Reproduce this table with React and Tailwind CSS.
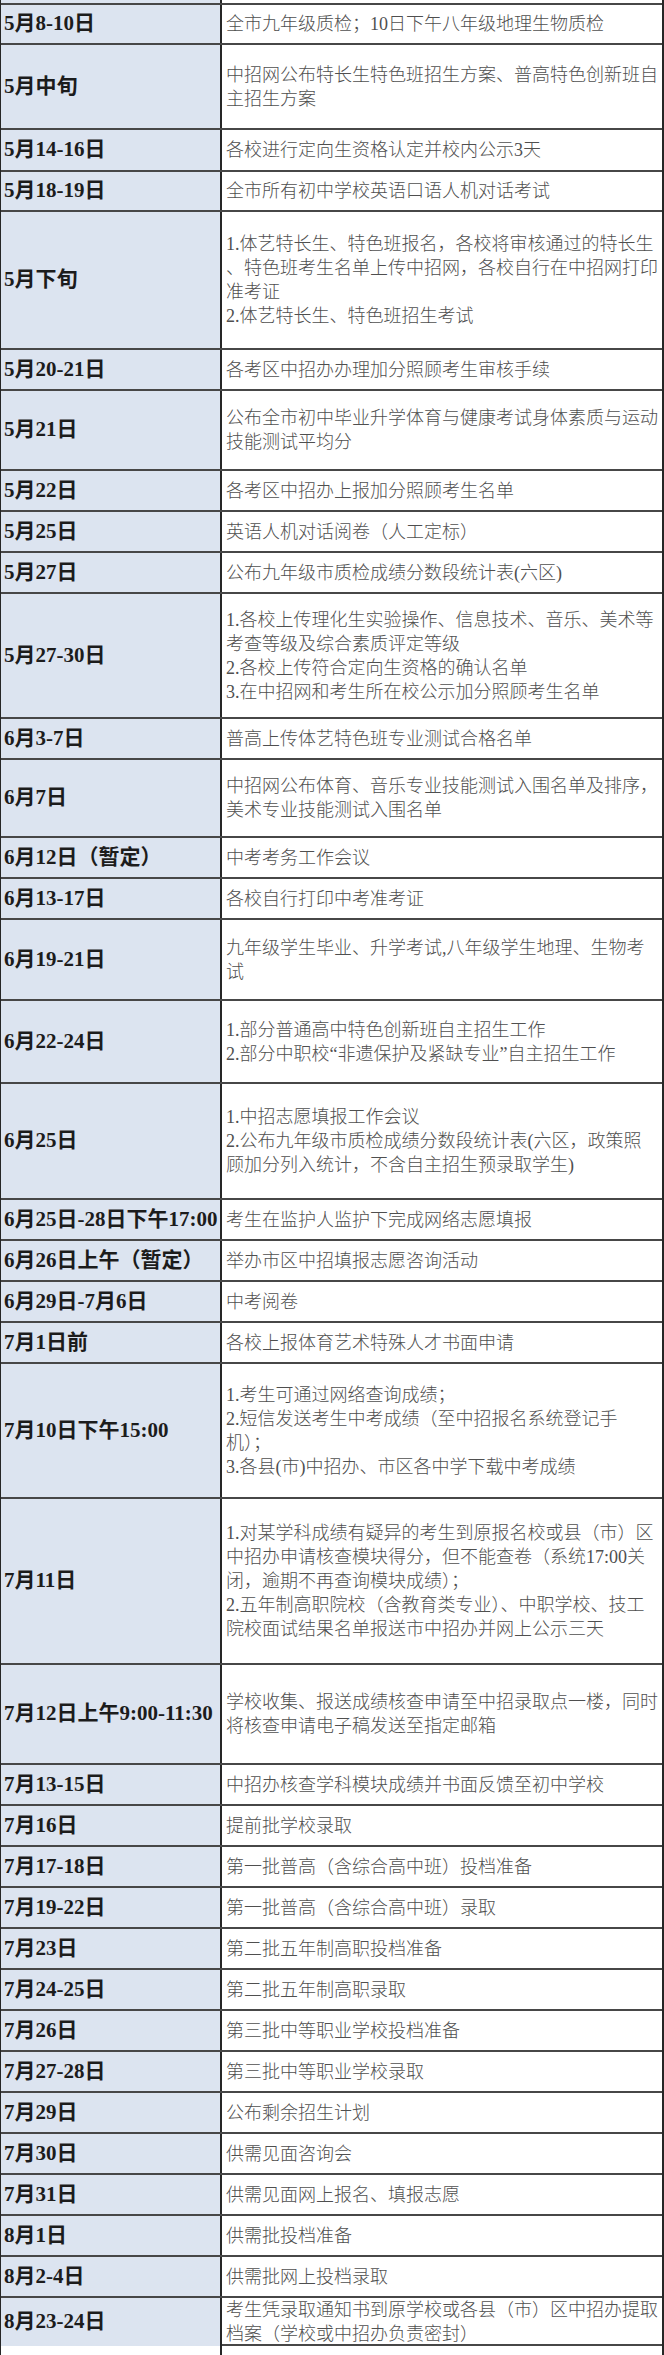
const rows = [
  { date: '', h: 'h-[5px]', lines: [] },
  { date: '5月8-10日', h: 'h-[40px]', lines: ['全市九年级质检；10日下午八年级地理生物质检'] },
  { date: '5月中旬', h: 'h-[85px]', lines: ['中招网公布特长生特色班招生方案、普高特色创新班自', '主招生方案'] },
  { date: '5月14-16日', h: 'h-[42px]', lines: ['各校进行定向生资格认定并校内公示3天'] },
  { date: '5月18-19日', h: 'h-[40px]', lines: ['全市所有初中学校英语口语人机对话考试'] },
  {
    date: '5月下旬',
    h: 'h-[138px]',
    lines: [
      '1.体艺特长生、特色班报名，各校将审核通过的特长生',
      '、特色班考生名单上传中招网，各校自行在中招网打印',
      '准考证',
      '2.体艺特长生、特色班招生考试',
    ],
  },
  { date: '5月20-21日', h: 'h-[41px]', lines: ['各考区中招办办理加分照顾考生审核手续'] },
  { date: '5月21日', h: 'h-[80px]', lines: ['公布全市初中毕业升学体育与健康考试身体素质与运动', '技能测试平均分'] },
  { date: '5月22日', h: 'h-[41px]', lines: ['各考区中招办上报加分照顾考生名单'] },
  { date: '5月25日', h: 'h-[41px]', lines: ['英语人机对话阅卷（人工定标）'] },
  { date: '5月27日', h: 'h-[41px]', lines: ['公布九年级市质检成绩分数段统计表(六区)'] },
  {
    date: '5月27-30日',
    h: 'h-[125px]',
    lines: [
      '1.各校上传理化生实验操作、信息技术、音乐、美术等',
      '考查等级及综合素质评定等级',
      '2.各校上传符合定向生资格的确认名单',
      '3.在中招网和考生所在校公示加分照顾考生名单',
    ],
  },
  { date: '6月3-7日', h: 'h-[41px]', lines: ['普高上传体艺特色班专业测试合格名单'] },
  { date: '6月7日', h: 'h-[78px]', lines: ['中招网公布体育、音乐专业技能测试入围名单及排序，', '美术专业技能测试入围名单'] },
  { date: '6月12日（暂定）', h: 'h-[41px]', lines: ['中考考务工作会议'] },
  { date: '6月13-17日', h: 'h-[41px]', lines: ['各校自行打印中考准考证'] },
  { date: '6月19-21日', h: 'h-[81px]', lines: ['九年级学生毕业、升学考试,八年级学生地理、生物考', '试'] },
  {
    date: '6月22-24日',
    h: 'h-[83px]',
    lines: ['1.部分普通高中特色创新班自主招生工作', '2.部分中职校“非遗保护及紧缺专业”自主招生工作'],
  },
  {
    date: '6月25日',
    h: 'h-[116px]',
    lines: [
      '1.中招志愿填报工作会议',
      '2.公布九年级市质检成绩分数段统计表(六区，政策照',
      '顾加分列入统计，不含自主招生预录取学生)',
    ],
  },
  { date: '6月25日-28日下午17:00', h: 'h-[41px]', lines: ['考生在监护人监护下完成网络志愿填报'] },
  { date: '6月26日上午（暂定）', h: 'h-[41px]', lines: ['举办市区中招填报志愿咨询活动'] },
  { date: '6月29日-7月6日', h: 'h-[41px]', lines: ['中考阅卷'] },
  { date: '7月1日前', h: 'h-[41px]', lines: ['各校上报体育艺术特殊人才书面申请'] },
  {
    date: '7月10日下午15:00',
    h: 'h-[135px]',
    lines: [
      '1.考生可通过网络查询成绩；',
      '2.短信发送考生中考成绩（至中招报名系统登记手',
      '机）；',
      '3.各县(市)中招办、市区各中学下载中考成绩',
    ],
  },
  {
    date: '7月11日',
    h: 'h-[166px]',
    lines: [
      '1.对某学科成绩有疑异的考生到原报名校或县（市）区',
      '中招办申请核查模块得分，但不能查卷（系统17:00关',
      '闭，逾期不再查询模块成绩）；',
      '2.五年制高职院校（含教育类专业）、中职学校、技工',
      '院校面试结果名单报送市中招办并网上公示三天',
    ],
  },
  {
    date: '7月12日上午9:00-11:30',
    h: 'h-[100px]',
    lines: ['学校收集、报送成绩核查申请至中招录取点一楼，同时', '将核查申请电子稿发送至指定邮箱'],
  },
  { date: '7月13-15日', h: 'h-[41px]', lines: ['中招办核查学科模块成绩并书面反馈至初中学校'] },
  { date: '7月16日', h: 'h-[41px]', lines: ['提前批学校录取'] },
  { date: '7月17-18日', h: 'h-[41px]', lines: ['第一批普高（含综合高中班）投档准备'] },
  { date: '7月19-22日', h: 'h-[41px]', lines: ['第一批普高（含综合高中班）录取'] },
  { date: '7月23日', h: 'h-[41px]', lines: ['第二批五年制高职投档准备'] },
  { date: '7月24-25日', h: 'h-[41px]', lines: ['第二批五年制高职录取'] },
  { date: '7月26日', h: 'h-[41px]', lines: ['第三批中等职业学校投档准备'] },
  { date: '7月27-28日', h: 'h-[41px]', lines: ['第三批中等职业学校录取'] },
  { date: '7月29日', h: 'h-[41px]', lines: ['公布剩余招生计划'] },
  { date: '7月30日', h: 'h-[41px]', lines: ['供需见面咨询会'] },
  { date: '7月31日', h: 'h-[41px]', lines: ['供需见面网上报名、填报志愿'] },
  { date: '8月1日', h: 'h-[41px]', lines: ['供需批投档准备'] },
  { date: '8月2-4日', h: 'h-[41px]', lines: ['供需批网上投档录取'] },
  {
    date: '8月23-24日',
    h: 'h-[48px]',
    lines: ['考生凭录取通知书到原学校或各县（市）区中招办提取', '档案（学校或中招办负责密封）'],
  },
];

// one table row: date cell on the left, event text on the right
const Row = ({ date, lines, h }) => (
  <div className={`grid grid-cols-[221px_1fr] border-b-2 border-[#474747] ${h}`}>
    <div className="flex items-center bg-[#dce4f0] border-r-2 border-[#262626] pl-[3px] text-[21px] font-bold text-[#1c1c1c] whitespace-nowrap">
      {date}
    </div>
    <div className="flex flex-col justify-center pl-[4px] text-[18px] leading-[24px] font-light text-[#4f4f4f]">
      {lines.map((line, i) => (
        <div key={i} className="whitespace-nowrap">
          {line}
        </div>
      ))}
    </div>
  </div>
);

const App = () => {
  return (
    <div className="w-[664px] h-[2355px] overflow-hidden bg-white border-l border-r-2 border-[#262626] font-['Liberation_Serif','Noto_Sans_CJK_SC',serif]">
      {rows.map((row, i) => (
        <Row key={i} {...row} />
      ))}
      {/* cut-off row at the very bottom */}
      <div className="grid grid-cols-[221px_1fr] h-[9px]">
        <div className="border-r-2 border-[#262626]"></div>
        <div></div>
      </div>
    </div>
  );
};

export default App;
